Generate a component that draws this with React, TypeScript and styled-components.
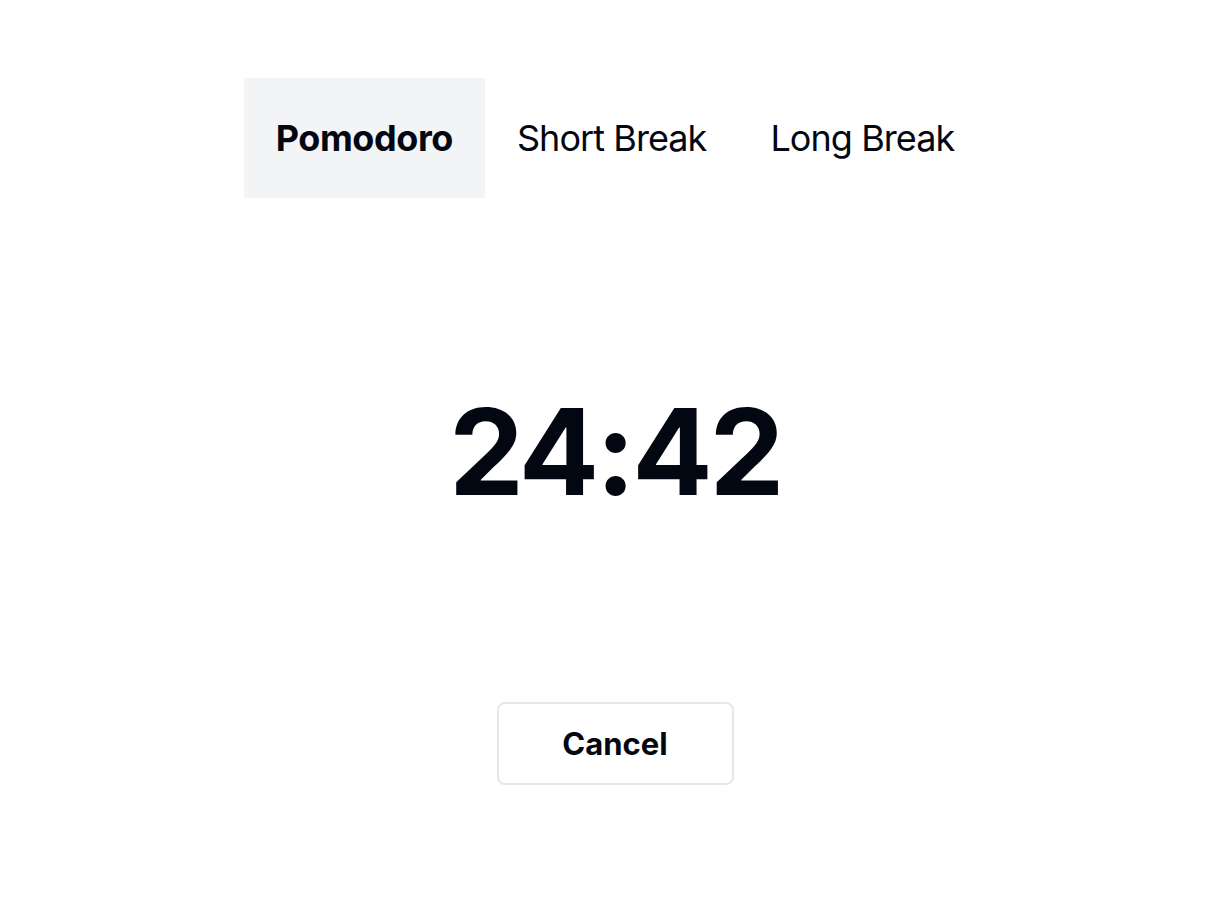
import React, { useState } from "react";
import styled, { createGlobalStyle } from "styled-components";

const Global = createGlobalStyle`
  html, body { margin: 0; padding: 0; background: #ffffff; }
  body { font-family: Inter, "Noto Sans", sans-serif; color: #030712; }
`;

const Page = styled.main`
  display: flex;
  flex-direction: column;
  align-items: center;
  padding-top: 78px;
  padding-left: 4px;
`;

const Tabs = styled.nav`
  display: flex;
`;

const Tab = styled.button<{ $active: boolean }>`
  font-family: Inter, "Noto Sans", sans-serif;
  font-size: 36px;
  line-height: 40px;
  font-weight: ${(p) => (p.$active ? 700 : 400)};
  letter-spacing: ${(p) => (p.$active ? "-0.012em" : "-0.026em")};
  color: #030712;
  background: ${(p) => (p.$active ? "#f3f4f6" : "transparent")};
  border: none;
  padding: 40px 32px;
  height: 120px;
  cursor: pointer;
`;

const Timer = styled.div`
  margin-top: 195px;
  font-size: 119px;
  line-height: 1;
  font-weight: 700;
  letter-spacing: -0.028em;
  color: #030712;
`;

const CancelButton = styled.button`
  margin-top: 190px;
  width: 237px;
  height: 83px;
  box-sizing: border-box;
  border: 2px solid #e5e7eb;
  border-radius: 8px;
  background: #ffffff;
  font-family: Inter, "Noto Sans", sans-serif;
  font-size: 31px;
  font-weight: 700;
  color: #030712;
  cursor: pointer;
`;

export default function App() {
  const [tab, setTab] = useState(0);
  const tabs = ["Pomodoro", "Short Break", "Long Break"];
  return (
    <>
      <Global />
      <Page>
        <Tabs>
          {tabs.map((t, i) => (
            <Tab key={t} $active={tab === i} onClick={() => setTab(i)}>
              {t}
            </Tab>
          ))}
        </Tabs>
        <Timer>24:42</Timer>
        <CancelButton>Cancel</CancelButton>
      </Page>
    </>
  );
}
